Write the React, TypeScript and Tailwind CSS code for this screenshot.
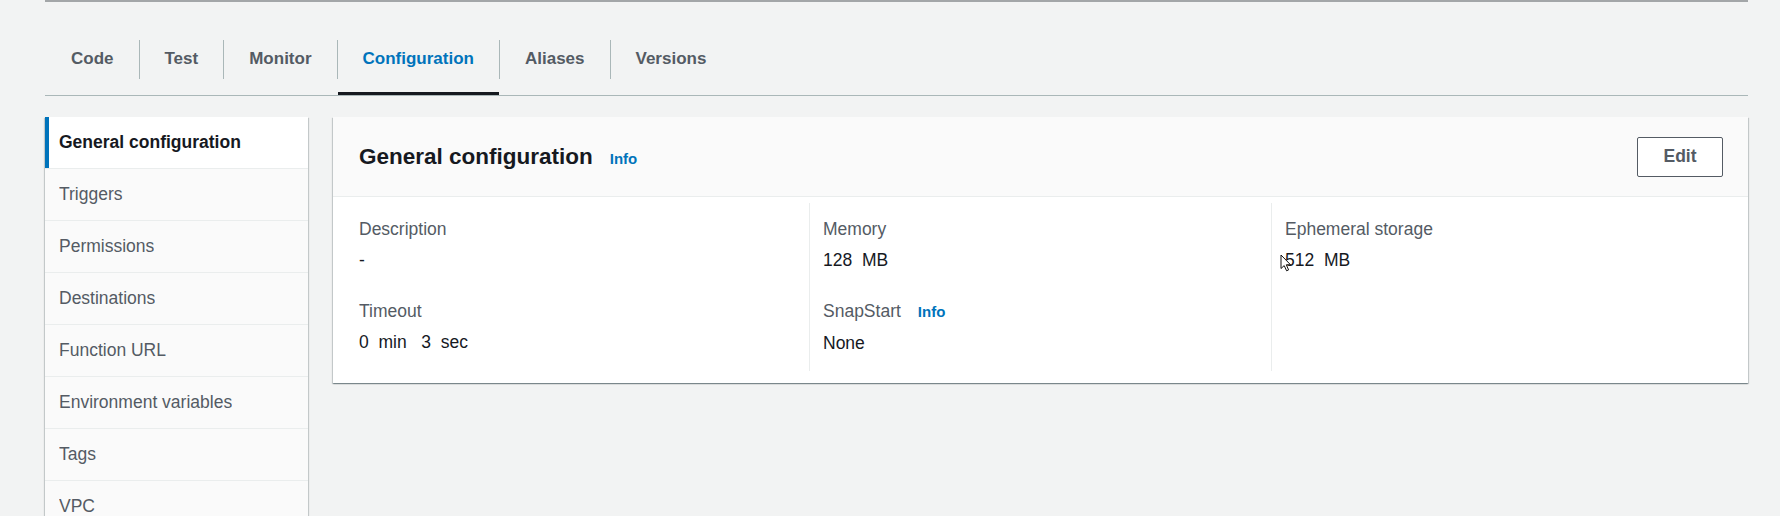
import React from 'react';

const tabs = ['Code', 'Test', 'Monitor', 'Configuration', 'Aliases', 'Versions'];

const sideItems = [
  'General configuration',
  'Triggers',
  'Permissions',
  'Destinations',
  'Function URL',
  'Environment variables',
  'Tags',
  'VPC',
  'Monitoring and operations tools',
];

const Field: React.FC<{ label: string; info?: boolean; last?: boolean; children: React.ReactNode }> = ({
  label,
  info,
  last,
  children,
}) => (
  <div className={last ? 'mt-[25px]' : ''}>
    <div className="flex items-baseline gap-[17px] leading-[26px] text-[#545b64]">
      <span>{label}</span>
      {info && <span className="text-[15px] font-bold text-[#0073bb]">Info</span>}
    </div>
    <div className="relative mt-[5px] leading-[26px] text-[#16191f] whitespace-pre">{children}</div>
  </div>
);

// curseur de la souris, posé sur la valeur
const Cursor = () => (
  <svg className="absolute left-[-5px] top-[7px]" width="12" height="18" viewBox="0 0 12 18">
    <path d="M1 1 L1 14.5 L4.2 11.6 L6.6 16.8 L8.6 15.9 L6.3 10.8 L10.6 10.8 Z" fill="#fff" stroke="#111" strokeWidth="1" strokeLinejoin="round" />
  </svg>
);

export default function App() {
  const active = 'Configuration';

  return (
    <div className="min-h-screen bg-[#f2f3f3] pl-[45px] pr-[32px] font-['Liberation_Sans',Arial,sans-serif] text-[17.5px]">
      <div className="h-[2px] bg-[#a3a6a8]" />

      {/* Onglets */}
      <div className="flex items-stretch border-b border-[#aab7b8] pt-[21px] pl-[1px]">
        {tabs.map((t, i) => (
          <React.Fragment key={t}>
            {i > 0 && <div className="w-px h-[39px] self-center mt-[1px] bg-[#aab7b8]" />}
            <div
              className={`flex h-[72px] items-center px-[25px] pt-[3px] text-[17px] font-bold border-b-[3px] ${
                t === active ? 'text-[#0073bb] border-[#16191f]' : 'text-[#545b64] border-transparent'
              }`}
            >
              {t}
            </div>
          </React.Fragment>
        ))}
      </div>

      <div className="mt-[21px] flex items-start gap-[25px]">
        {/* Menu latéral */}
        <div className="w-[263px] shrink-0 bg-[#fafafa] shadow-[0_1px_1px_0_rgba(0,28,36,0.3),1px_1px_1px_0_rgba(0,28,36,0.15),-1px_1px_1px_0_rgba(0,28,36,0.15)]">
          {sideItems.map((s, i) => (
            <div
              key={s}
              className={`relative flex h-[52px] items-center border-b border-[#eaeded] pl-[14px] ${
                i === 0 ? 'bg-white font-bold text-[#16191f]' : 'text-[#545b64]'
              }`}
            >
              {i === 0 && <span className="absolute left-0 top-0 bottom-0 w-[4px] bg-[#0073bb]" />}
              <span className="whitespace-nowrap overflow-hidden">{s}</span>
            </div>
          ))}
        </div>

        {/* Carte */}
        <div className="flex-1 bg-white shadow-[0_1px_1px_0_rgba(0,28,36,0.3),1px_1px_1px_0_rgba(0,28,36,0.15),-1px_1px_1px_0_rgba(0,28,36,0.15)]">
          <div className="flex h-[80px] items-center justify-between border-b border-[#eaeded] bg-[#fafafa] pl-[26px] pr-[25px]">
            <div className="flex items-baseline gap-[17px]">
              <h2 className="text-[22.5px] font-bold text-[#16191f]">General configuration</h2>
              <span className="text-[15px] font-bold text-[#0073bb]">Info</span>
            </div>
            <button className="h-[40px] w-[86px] rounded-[2px] border border-[#545b64] bg-white font-bold text-[#545b64]">
              Edit
            </button>
          </div>

          <div className="grid grid-cols-[450px_462px_1fr] px-[26px] pt-[6px] pb-[12px]">
            <div className="pt-[13px] pb-[15px]">
              <Field label="Description">-</Field>
              <Field label="Timeout" last>
                {'0  min   3  sec'}
              </Field>
            </div>
            <div className="border-l border-[#eaeded] pl-[13px] pt-[13px] pb-[15px]">
              <Field label="Memory">{'128  MB'}</Field>
              <Field label="SnapStart" info last>
                None
              </Field>
            </div>
            <div className="border-l border-[#eaeded] pl-[13px] pt-[13px] pb-[15px]">
              <Field label="Ephemeral storage">
                {'512  MB'}
                <Cursor />
              </Field>
            </div>
          </div>
        </div>
      </div>
    </div>
  );
}
